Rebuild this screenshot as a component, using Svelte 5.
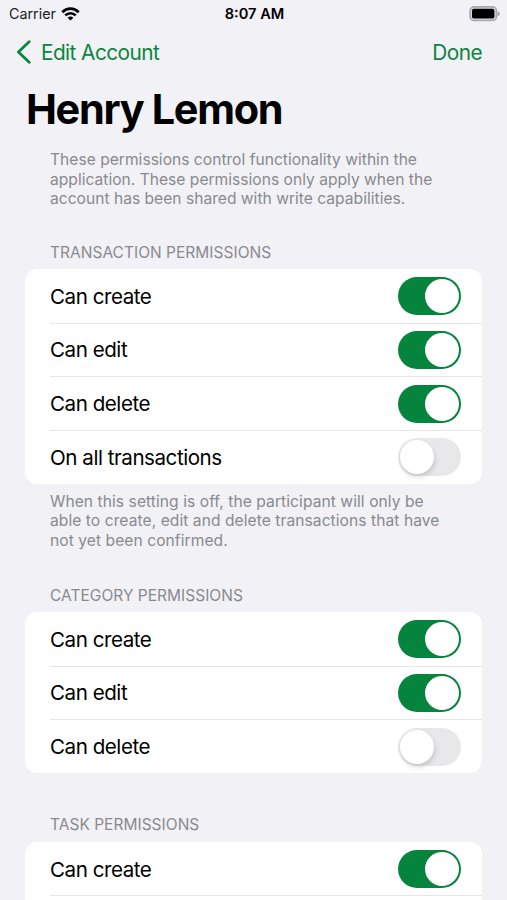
<script lang="ts">
	interface Permission {
		label: string
		enabled: boolean
	}
	interface Section {
		title: string
		rows: Permission[]
		footer?: string
	}

	let sections = $state<Section[]>([
		{
			title: 'Transaction permissions',
			rows: [
				{ label: 'Can create', enabled: true },
				{ label: 'Can edit', enabled: true },
				{ label: 'Can delete', enabled: true },
				{ label: 'On all transactions', enabled: false },
			],
			footer:
				'When this setting is off, the participant will only be\nable to create, edit and delete transactions that have\nnot yet been confirmed.',
		},
		{
			title: 'Category permissions',
			rows: [
				{ label: 'Can create', enabled: true },
				{ label: 'Can edit', enabled: true },
				{ label: 'Can delete', enabled: false },
			],
		},
		{
			title: 'Task permissions',
			rows: [{ label: 'Can create', enabled: true }],
		},
	])

	const intro =
		'These permissions control functionality within the\napplication. These permissions only apply when the\naccount has been shared with write capabilities.'
</script>

<div class="screen">
	<div class="status">
		<div class="carrier">
			<span>Carrier</span>
			<svg width="19" height="14" viewBox="0 0 19 14" fill="none" stroke="#000" stroke-width="2.7">
				<path d="M1.3 5.2C5.9 .5 13.1 .5 17.7 5.2" />
				<path d="M4.3 8.4C7.2 5.5 11.8 5.5 14.7 8.4" />
				<path d="M9.5 13.6L6.6 10.7Q9.5 8.2 12.4 10.7Z" fill="#000" stroke="none" />
			</svg>
		</div>
		<span class="time">8:07 AM</span>
		<svg class="battery" width="31" height="16" viewBox="0 0 31 16">
			<rect x="1.1" y=".9" width="26.4" height="13.6" rx="4" fill="#d8d8da" stroke="#a9a9ac" stroke-width="1.6" />
			<rect x="3" y="2.8" width="22.4" height="9.8" rx="1.8" />
			<path d="M28.6 5.2Q30.8 6 30.8 7.7T28.6 10.2Z" fill="#a0a0a3" />
		</svg>
	</div>

	<nav>
		<button class="back">
			<svg width="16" height="24" viewBox="0 0 16 24" fill="none" stroke="currentColor" stroke-width="2.8" stroke-linecap="round" stroke-linejoin="round">
				<path d="M13.2 1.8L2.4 12L13.2 22.2" />
			</svg>
			<span>Edit Account</span>
		</button>
		<button class="done">Done</button>
	</nav>

	<h1>Henry Lemon</h1>
	<p class="note intro">{intro}</p>

	{#each sections as section}
		<section>
			<h2>{section.title}</h2>
			<div class="card" class:continued={section.rows.length === 1}>
				{#each section.rows as row}
					<div class="row">
						<span>{row.label}</span>
						<button
							class="switch"
							class:on={row.enabled}
							role="switch"
							aria-checked={row.enabled}
							aria-label={row.label}
							onclick={() => (row.enabled = !row.enabled)}
						>
							<i></i>
						</button>
					</div>
				{/each}
			</div>
			{#if section.footer}
				<p class="note">{section.footer}</p>
			{/if}
		</section>
	{/each}
</div>

<style>
	:global(body) {
		margin: 0;
		background: #f1f1f6;
	}
	.screen {
		height: 900px;
		overflow: hidden;
		box-sizing: border-box;
		background: #f1f1f6;
		color: #000;
		font-family: Inter, 'Liberation Sans', sans-serif;
	}
	button {
		padding: 0;
		border: none;
		background: none;
		font: inherit;
		letter-spacing: inherit;
		color: #0b8540;
		cursor: pointer;
	}
	.status {
		display: grid;
		grid-template-columns: 1fr auto 1fr;
		align-items: center;
		height: 27px;
		padding: 0 7px 0 9px;
		font-size: 14.3px;
	}
	.carrier {
		display: flex;
		align-items: center;
		gap: 5px;
		color: #222;
	}
	.time {
		font-size: 14.6px;
		font-weight: 600;
	}
	.battery {
		justify-self: end;
	}
	nav {
		display: flex;
		justify-content: space-between;
		align-items: center;
		height: 50px;
		padding: 0 25px 0 16px;
		font-size: 20.8px;
		letter-spacing: -0.56px;
	}
	.back {
		display: flex;
		align-items: center;
		gap: 9px;
	}
	.done {
		padding-top: 1px;
	}
	h1 {
		margin: 0 0 0 26px;
		height: 73px;
		line-height: 64px;
		font-size: 41.4px;
		font-weight: 700;
		letter-spacing: -1.3px;
	}
	.note {
		margin: 0 0 1.4px 50px;
		padding-top: 8px;
		font-size: 15.6px;
		line-height: 19.5px;
		letter-spacing: 0.06px;
		white-space: pre;
		color: #8a8a8e;
	}
	.intro {
		margin-bottom: 0;
		padding: 0;
		letter-spacing: 0.01px;
	}
	section {
		padding-top: 34px;
	}
	h2 {
		margin: 0 0 6.4px 50px;
		font-size: 15.5px;
		font-weight: 400;
		line-height: 20px;
		letter-spacing: 0.02px;
		text-transform: uppercase;
		color: #8a8a8e;
	}
	.card {
		margin: 0 25px;
		border-radius: 12px;
		background: #fff;
	}
	.card:last-child {
		margin-bottom: 8.5px;
	}
	.row {
		display: flex;
		justify-content: space-between;
		align-items: center;
		box-sizing: border-box;
		height: 53.7px;
		margin-left: 25px;
		padding: 1px 21px 0 0;
		font-size: 20.6px;
		letter-spacing: -0.47px;
	}
	.row + .row {
		padding-top: 0;
		border-top: 1px solid #e6e6e8;
	}
	/* the card runs on past the bottom of the screen */
	.continued {
		height: 80px;
	}
	.continued .row {
		height: 54.5px;
		border-bottom: 1px solid #e6e6e8;
	}
	.switch {
		display: flex;
		box-sizing: border-box;
		width: 63px;
		height: 38px;
		padding: 2px;
		border-radius: 19px;
		background: #e8e8ea;
	}
	.switch i {
		width: 34px;
		height: 34px;
		border-radius: 50%;
		background: #fff;
		box-shadow: 1px 3px 5px rgba(0, 0, 0, 0.15);
	}
	.switch.on {
		justify-content: flex-end;
		background: #04843c;
	}
	.switch.on i {
		box-shadow: none;
	}
</style>
